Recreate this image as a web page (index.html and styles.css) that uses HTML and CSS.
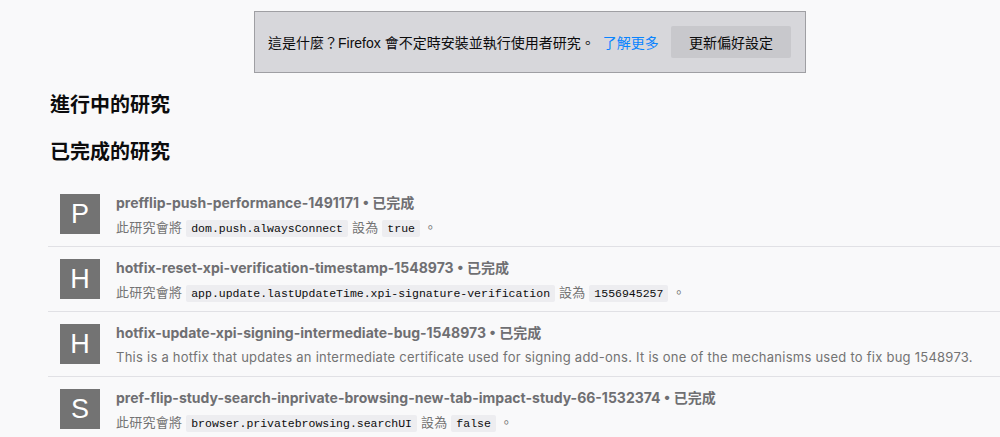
FILE: index.html
```html
<!DOCTYPE html>
<html lang="zh-TW">
<head>
<meta charset="UTF-8" />
<title>Shield 研究</title>
<meta name="viewport" content="width=device-width, initial-scale=1.0">
<link rel="stylesheet" href="styles.css">
</head>
<body>

  <main class="studies">
    <div class="info-box">
      <span class="info-text">這是什麼？Firefox 會不定時安裝並執行使用者研究。</span>
      <a class="info-link" href="#">了解更多</a>
      <button class="info-button" type="button">更新偏好設定</button>
    </div>

    <h2>進行中的研究</h2>
    <h2>已完成的研究</h2>

    <ul class="study-list">
      <li class="study">
        <div class="study-icon">P</div>
        <div class="study-details">
          <div class="study-name">prefflip-push-performance-1491171 • 已完成</div>
          <div class="study-desc">此研究會將 <code>dom.push.alwaysConnect</code> 設為 <code>true</code> 。</div>
        </div>
      </li>
      <li class="study">
        <div class="study-icon">H</div>
        <div class="study-details">
          <div class="study-name">hotfix-reset-xpi-verification-timestamp-1548973 • 已完成</div>
          <div class="study-desc">此研究會將 <code>app.update.lastUpdateTime.xpi-signature-verification</code> 設為 <code>1556945257</code> 。</div>
        </div>
      </li>
      <li class="study">
        <div class="study-icon">H</div>
        <div class="study-details">
          <div class="study-name">hotfix-update-xpi-signing-intermediate-bug-1548973 • 已完成</div>
          <div class="study-desc">This is a hotfix that updates an intermediate certificate used for signing add-ons. It is one of the mechanisms used to fix bug 1548973.</div>
        </div>
      </li>
      <li class="study">
        <div class="study-icon">S</div>
        <div class="study-details">
          <div class="study-name">pref-flip-study-search-inprivate-browsing-new-tab-impact-study-66-1532374 • 已完成</div>
          <div class="study-desc">此研究會將 <code>browser.privatebrowsing.searchUI</code> 設為 <code>false</code> 。</div>
        </div>
      </li>
    </ul>
  </main>

</body>
</html>
```

FILE: styles.css
```css
body {
  font-family: "Liberation Sans", "Noto Sans CJK TC", sans-serif;
  margin: 0;
  padding: 0;
  background-color: #f9f9fa;
  color: #0c0c0d;
  overflow: hidden;
}
.studies {
  padding: 11px 0 0 48px;
}
.info-box {
  display: flex;
  align-items: center;
  box-sizing: border-box;
  width: 552px;
  height: 62px;
  margin-left: 206px;
  padding: 0 14px 0 13px;
  background-color: #d7d7db;
  border: 1px solid #9f9fa3;
  font-size: 14px;
  color: #0c0c0d;
}
.info-link {
  margin-left: 8px;
  color: #0a84ff;
  text-decoration: none;
}
.info-button {
  margin-left: auto;
  width: 120px;
  height: 32px;
  border: none;
  border-radius: 2px;
  background-color: #c8c8cc;
  font-family: inherit;
  font-size: 14px;
  color: #0c0c0d;
}
h2 {
  margin: 0 0 0 2px;
  font-size: 20px;
  line-height: 24px;
  font-weight: bold;
}
h2:first-of-type {
  margin-top: 20px;
  margin-bottom: 23px;
}
.study-list {
  list-style: none;
  margin: 18px 0 0 0;
  padding: 0;
}
.study {
  display: flex;
  align-items: flex-start;
  gap: 16px;
  box-sizing: border-box;
  height: 65px;
  padding: 12px 0 0 12px;
  border-bottom: 1px solid #e1e1e5;
}
.study-icon {
  flex: none;
  width: 40px;
  height: 40px;
  background-color: #737373;
  color: #ffffff;
  font-size: 27px;
  line-height: 40px;
  text-align: center;
}
.study-name,
.study-desc {
  font-family: "Inter", "Noto Sans CJK TC", sans-serif;
  white-space: nowrap;
}
.study-name {
  font-size: 14px;
  font-weight: bold;
  line-height: 18px;
  color: #6f6f72;
}
.study-desc {
  margin-top: 6px;
  font-size: 13px;
  line-height: 18px;
  letter-spacing: 0.25px;
  color: #737373;
}
code {
  font-family: "Liberation Mono", monospace;
  font-size: 11.5px;
  line-height: 1;
  letter-spacing: 0;
  color: #0c0c0d;
  background-color: #ededf0;
  padding: 2px 5px;
  border-radius: 2px;
}
```
